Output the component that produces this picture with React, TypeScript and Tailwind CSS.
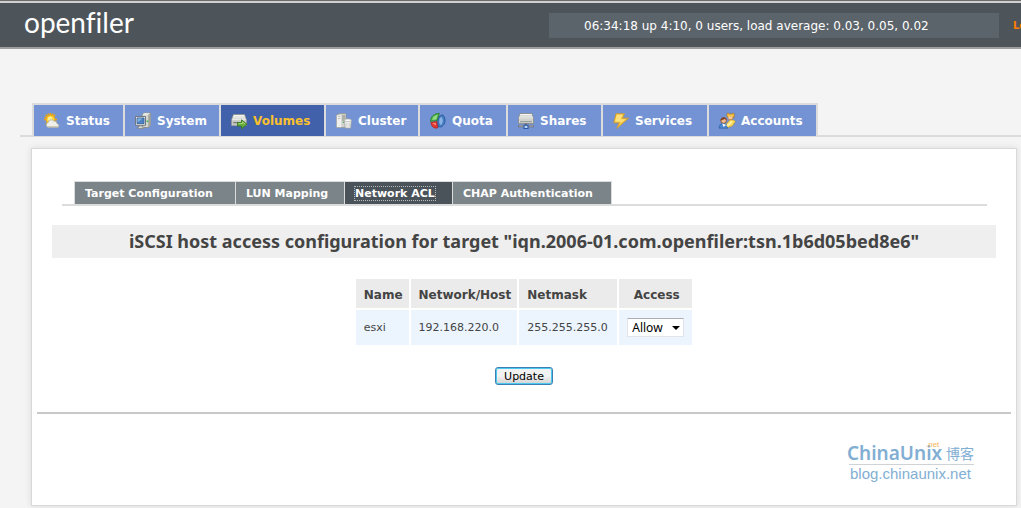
import type { ReactNode } from "react";

const iconClass = "h-[18px] w-[18px] shrink-0";

const StatusIcon = () => (
  <svg viewBox="0 0 18 18" className={iconClass} aria-hidden="true">
    <g stroke="#e8a515" strokeWidth="1.6">
      <path d="M7.5 1v13M1 7.5h13M2.8 2.8l9.4 9.4M12.2 2.8l-9.4 9.4M5 1.6l5 11.8M10 1.6L5 13.4M1.6 5l11.8 5" />
    </g>
    <circle cx="7.5" cy="7.5" r="4.3" fill="#ffd540" stroke="#f0a818" />
    <circle cx="7" cy="7" r="2.2" fill="#fff09a" />
    <path d="M5.5 15.5a2.6 2.6 0 0 1-.3-5.1 3.1 3.1 0 0 1 5.6-1.3 2.8 2.8 0 0 1 3.3 2.6 2 2 0 0 1 .7 3.8z" fill="#f0f0ea" stroke="#aaa89c" strokeWidth=".8" />
    <path d="M5 14.6h10" stroke="#c9c8bd" strokeWidth="1.2" />
  </svg>
);

const SystemIcon = () => (
  <svg viewBox="0 0 18 18" className={iconClass} aria-hidden="true">
    <path d="M8 3l2-2h6.5v12.5L14 15.5H8z" fill="#d5d6d0" stroke="#84877f" strokeWidth=".8" />
    <path d="M14.2 3v12.2l2.3-1.8V1z" fill="#a5a79f" />
    <path d="M9 2.6h5M9.5 1.4h6" stroke="#f2f2ee" strokeWidth=".8" />
    <path d="M12.5 8.5h2v1.6h-2z" fill="#49b956" />
    <path d="M1.5 4.5h10v8.8h-10z" fill="#e6e7e4" stroke="#6f7780" />
    <path d="M3 6h7v5.6H3z" fill="#4b83c6" stroke="#2d5b98" strokeWidth=".8" />
    <path d="M3.5 6.5h5l-5 4z" fill="#86b2e2" />
    <path d="M5 13.8h3.2v1.4H10v1.3H3.5v-1.3H5z" fill="#d9dad6" stroke="#73756f" strokeWidth=".6" />
  </svg>
);

const VolumesIcon = () => (
  <svg viewBox="0 0 18 18" className={iconClass} aria-hidden="true">
    <path d="M3.5 2.5h11l2 5.5v5.5h-15V8z" fill="#dcddda" stroke="#8f918c" strokeWidth=".8" />
    <path d="M4 3h10l1.7 4.8H2.3z" fill="#f5f5f2" />
    <path d="M3.5 5h11M3 6.7h12" stroke="#c7c9c4" strokeWidth=".7" />
    <path d="M2 8.3h14v5H2z" fill="#c5c7c2" />
    <path d="M3.3 10.6h6" stroke="#777b79" strokeWidth="1.2" />
    <path d="M7.5 10.5h4V7.8l5.5 4.5-5.5 4.5v-2.7h-4z" fill="#69ae3f" stroke="#2e751b" strokeWidth=".8" />
    <path d="M8.5 11.5h4V10l2.6 2" fill="none" stroke="#acd97c" strokeWidth=".9" />
  </svg>
);

const ClusterIcon = () => (
  <svg viewBox="0 0 18 18" className={iconClass} aria-hidden="true">
    <path d="M1.5 3L5 1.5h6V14l-1.5 1.5h-8z" fill="#d0d1cd" stroke="#92958e" strokeWidth=".7" />
    <path d="M1.8 3.2h4.5v12H1.8z" fill="#eff0ee" />
    <path d="M7 4h3M7 6h3M7 8h3" stroke="#85887f" strokeWidth=".9" />
    <path d="M3 4.5h2.4M3 6.5h2.4" stroke="#b5b8b2" strokeWidth=".8" />
    <circle cx="8.5" cy="10.3" r=".8" fill="#4ba356" />
    <path d="M9.5 8.3h6.8l-.6 7.8h-5.5z" fill="#f4f4f2" stroke="#a0a29d" strokeWidth=".8" />
    <ellipse cx="12.9" cy="8.2" rx="3.5" ry="1.3" fill="#fff" stroke="#a6a8a3" strokeWidth=".7" />
    <path d="M11.6 10.7v4M13 10.9v4M14.5 10.7v4" stroke="#c1c3c0" strokeWidth=".6" />
  </svg>
);

const QuotaIcon = () => (
  <svg viewBox="0 0 18 18" className={iconClass} aria-hidden="true">
    <path d="M1.5 9.3C1.5 4.8 5 1.5 10.3 1.3L8.3 8.6z" fill="#4cb34c" stroke="#257c2a" strokeWidth=".8" />
    <path d="M3.2 8c.5-2.9 2.5-4.8 5.5-5.3L7.3 7.3z" fill="#98d989" />
    <path d="M10.7 4.2l3-1.5c3.5 3.8 3.3 9-1.2 12.1H9.2c-.8-3.7-.7-7.3 1.5-10.6z" fill="#477fc4" stroke="#204f95" strokeWidth=".8" />
    <path d="M10.8 6l1.8-.9c1.8 2.9 1.6 5.9-.7 8.2-1.9-1.8-2.1-4.8-1.1-7.3z" fill="#8ab3e3" />
    <path d="M1.8 10.5l6-1 .8 6.5c-3.8.7-6.2-1.5-6.8-5.5z" fill="#e3382f" stroke="#a91f1c" strokeWidth=".7" />
    <path d="M3.3 11.3l3.3-.5.5 2.8z" fill="#ff8d7f" />
  </svg>
);

const SharesIcon = () => (
  <svg viewBox="0 0 18 18" className={iconClass} aria-hidden="true">
    <path d="M3 1.5h12l1.5 5v5h-15v-5z" fill="#d9dad7" stroke="#858781" strokeWidth=".8" />
    <path d="M3.5 2h11l1.3 4H2.2z" fill="#f7f7f5" />
    <path d="M3.2 3.7h11.6M2.8 5.2h12.4M2 8h14" stroke="#bfc1bc" strokeWidth=".7" />
    <path d="M3 9.7h12" stroke="#92958f" strokeWidth="1.1" />
    <path d="M8 11.5h2v2H8z" fill="#666a6b" />
    <path d="M1 13.3h16v2H1z" fill="#72767a" />
    <path d="M2 14h14" stroke="#c6c8ca" strokeWidth=".6" />
    <path d="M7 13.2h4v3.3H7z" fill="#b9d5fa" stroke="#2957a2" strokeWidth="1.1" />
  </svg>
);

const ServicesIcon = () => (
  <svg viewBox="0 0 18 18" className={iconClass} aria-hidden="true">
    <path d="M4 1.8h8.5L10.3 6.2h6.2L4.8 16.4l2.4-5.6H1.8z" fill="#f6c843" stroke="#cf9a2c" strokeWidth=".9" strokeLinejoin="round" />
    <path d="M4.8 2.8h6L8.5 7.2h5L8 11.4l1-1.6H3z" fill="#ffe07a" />
  </svg>
);

const AccountsIcon = () => (
  <svg viewBox="0 0 18 18" className={iconClass} aria-hidden="true">
    <path d="M9 4.6C8.6 3 9 1 10 .9l1.6 1 2.8-.2 1.2-.8c1.1 1.2.6 2.8.5 4.5z" fill="#f5bd3c" stroke="#9f661c" strokeWidth=".6" />
    <circle cx="12.4" cy="5.2" r="2.6" fill="#f7c79a" stroke="#a8642c" strokeWidth=".5" />
    <path d="M9.6 4.4h5.8l-.4-1.6h-5z" fill="#f5c847" />
    <path d="M7.5 13l4.5-5.2 4 .2 1.4 1.6-3 4.4-6 2.2z" fill="#f7d95b" stroke="#b2832d" strokeWidth=".6" />
    <circle cx="5.6" cy="8.6" r="2.8" fill="#f1ba8a" stroke="#7b3f20" strokeWidth=".7" />
    <path d="M2.6 8.7C2.2 4.4 8.8 4 8.9 8.2L6.7 7z" fill="#81442a" />
    <path d="M1 16.2c.2-3.5 1.7-4.7 4-4.6l3.5 1.2 1.3 3.4z" fill="#4a89d0" stroke="#285d9e" strokeWidth=".6" />
    <path d="M4.2 11.6l1.5 3.4 2.3-2.3z" fill="#fff" />
    <path d="M8.3 13.4l5.2-4.6 1.2 1.3-5 4.7z" fill="#fff3a8" />
  </svg>
);

type Tab = { label: string; width: string; icon?: ReactNode; active?: boolean };

const tabs: Tab[] = [
  { label: "Status", width: "w-[89px]", icon: <StatusIcon /> },
  { label: "System", width: "w-[94px]", icon: <SystemIcon /> },
  { label: "Volumes", width: "w-[103px]", icon: <VolumesIcon />, active: true },
  { label: "Cluster", width: "w-[92px]", icon: <ClusterIcon /> },
  { label: "Quota", width: "w-[86px]", icon: <QuotaIcon /> },
  { label: "Shares", width: "w-[93px]", icon: <SharesIcon /> },
  { label: "Services", width: "w-[104px]", icon: <ServicesIcon /> },
  { label: "Accounts", width: "w-[107px]", icon: <AccountsIcon /> },
];

const subTabs: Tab[] = [
  { label: "Target Configuration", width: "w-40" },
  { label: "LUN Mapping", width: "w-[108px]" },
  { label: "Network ACL", width: "w-[107px]", active: true },
  { label: "CHAP Authentication", width: "w-[158px]" },
];

function Header() {
  return (
    <header className="border-t border-[#6b6b6b]">
      <div className="flex h-12 items-start overflow-hidden border-t-2 border-b-2 border-t-[#d2cfd0] border-b-[#a09d9d] bg-[#4d555b]">
        <div className="pl-6 font-['Lato',sans-serif] text-[28px] leading-[38px] text-white [font-variant-ligatures:none]">
          openfiler
        </div>
        <div className="mt-2.5 ml-auto h-[25px] w-[450px] bg-[#5c646b] px-[35px] text-[12px] leading-[26px] whitespace-nowrap text-white">
          06:34:18 up 4:10, 0 users, load average: 0.03, 0.05, 0.02
        </div>
        <a href="#logout" className="mt-2.5 ml-3.5 w-2 overflow-hidden text-[10px] leading-[26px] font-bold whitespace-nowrap text-[#ff7d00]">
          Log Out
        </a>
      </div>
    </header>
  );
}

function MainTabs() {
  return (
    <nav className="mt-[54px] ml-5 flex">
      <span className="w-3 border-b-2 border-[#dcdcdc]" />
      <ul className="flex gap-0.5 border-2 border-b border-[#dcdcdc] bg-[#dcdcdc]">
        {tabs.map((tab) => (
          <li key={tab.label} className={tab.width}>
            <a
              href={"#" + tab.label.toLowerCase()}
              className={
                "flex h-[31px] items-center gap-[5px] pt-px pl-[9px] text-[12px] font-bold " +
                (tab.active ? "bg-[#4161aa] text-[#fbc02d]" : "bg-[#7493d4] text-white")
              }
            >
              {tab.icon}
              {tab.label}
            </a>
          </li>
        ))}
      </ul>
      <span className="grow border-b-2 border-[#dcdcdc]" />
    </nav>
  );
}

function SubTabs() {
  return (
    <nav className="mr-[29px] ml-[30px] flex border-b-2 border-[#dcdcdc] pl-3">
      <ul className="flex gap-px border border-b-0 border-[#dcdcdc] bg-[#dcdcdc]">
        {subTabs.map((tab) => (
          <li
            key={tab.label}
            className={"flex h-[22px] items-center pt-px pl-2.5 " + tab.width + (tab.active ? " bg-[#4a5359]" : " bg-[#7b8488]")}
          >
            <a
              href="#"
              className={
                "text-[11px] leading-[13px] font-bold whitespace-nowrap text-white " +
                (tab.active ? "outline outline-dotted outline-[#b5babd]" : "")
              }
            >
              {tab.label}
            </a>
          </li>
        ))}
      </ul>
    </nav>
  );
}

function AclTable() {
  const head = "h-[29px] bg-[#ebebeb] pt-0.5 pr-1.5 pl-2 text-[12px] font-bold";
  const cell = "h-[35px] bg-[#ecf5fe] px-2";
  const text = cell + " pt-0.5";
  return (
    <table className="mx-auto mt-[19px] border-separate border-spacing-0.5 text-left text-[11px] text-[#444]">
      <thead>
        <tr>
          <th className={head}>Name</th>
          <th className={head}>Network/Host</th>
          <th className={head + " w-[98px]"}>Netmask</th>
          <th className={head + " text-center"}>
            <label htmlFor="access">Access</label>
          </th>
        </tr>
      </thead>
      <tbody>
        <tr>
          <td className={text}>esxi</td>
          <td className={text}>192.168.220.0</td>
          <td className={text}>255.255.255.0</td>
          <td className={cell}>
            <div className="relative">
              <select
                id="access"
                defaultValue="Allow"
                className="block h-[19px] w-[57px] appearance-none border border-[#e1e5ea] border-t-[#abadb3] bg-white px-1 font-['Noto_Sans',sans-serif] text-[12px] leading-4 text-black"
              >
                <option>Allow</option>
                <option>Deny</option>
              </select>
              <svg viewBox="0 0 8 4" className="pointer-events-none absolute top-2 right-1 h-1 w-2" aria-hidden="true">
                <path d="M0 0h8L4 4z" fill="#000" />
              </svg>
            </div>
          </td>
        </tr>
      </tbody>
    </table>
  );
}

function Watermark() {
  return (
    <div className="mt-[29px] mr-[42px] ml-auto w-[127px] font-['Liberation_Sans',sans-serif] text-[#82aed3]">
      <div className="relative flex h-[21px] items-center justify-between">
        <span className="font-['Noto_Sans',sans-serif] text-[19px] font-semibold">ChinaUnix</span>
        <span className="absolute -top-0.5 left-[79px] text-[8px] leading-2 text-[#f7b45a]">.net</span>
        <span className="font-['Noto_Sans_CJK_SC',sans-serif] text-[14px]">博客</span>
      </div>
      <div className="ml-0.5 border-t border-[#d0d3d6] pl-px text-[15px] leading-[18px]">blog.chinaunix.net</div>
    </div>
  );
}

export default function App() {
  return (
    <div className="min-h-screen overflow-hidden bg-[#f4f4f4] font-['DejaVu_Sans',Verdana,sans-serif]">
      <Header />
      <MainTabs />
      <main className="mt-[11px] mr-1 mb-0.5 ml-[31px] border border-[#d9d9d9] bg-white pt-8 pb-[22px] shadow-[0_0_6px_#d8d8d8]">
        <SubTabs />
        <h1 className="mx-5 mt-[19px] bg-[#efefef] text-center font-['Noto_Sans',sans-serif] text-[18px] leading-[33px] font-bold text-[#444]">
          iSCSI host access configuration for target "iqn.2006-01.com.openfiler:tsn.1b6d05bed8e6"
        </h1>
        <AclTable />
        <div className="mt-5 flex justify-center">
          <button
            type="button"
            className="h-[18px] w-[58px] rounded-[3px] border border-[#3c7fb1] bg-linear-to-b from-[#f2f2f2] from-50% to-[#d2d2d2] pt-px text-[11px] leading-[15px] text-black shadow-[inset_0_0_0_1px_#4cc9f0]"
          >
            Update
          </button>
        </div>
        <hr className="mx-[5px] mt-[27px] border-t-2 border-[#c8c8c8]" />
        <Watermark />
      </main>
    </div>
  );
}
